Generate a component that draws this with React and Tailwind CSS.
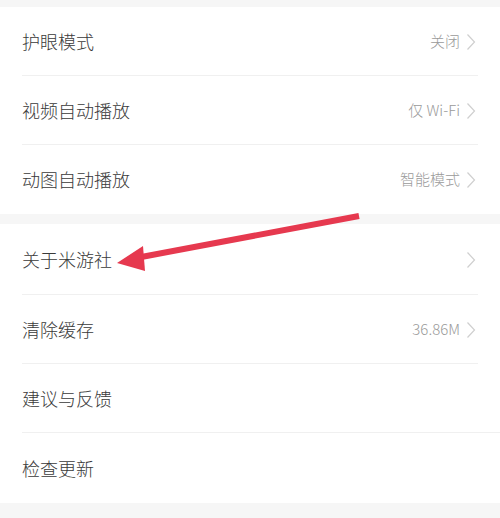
import React from 'react';

const Chevron = () => (
  <svg width="10" height="18" viewBox="0 0 10 18" fill="none" className="ml-[6px]">
    <path d="M1.5 1.5 L8.5 9 L1.5 16.5" stroke="#cfcfcf" strokeWidth="1.2" />
  </svg>
);

const Row = ({ title, value, arrow = true, height = 'h-[69px]', line = 'inset' }) => (
  <div className={`relative flex items-center pl-[22px] pr-[24px] ${height}`}>
    <span className="flex-1 text-[18px] font-light text-[#3a3a3a]">{title}</span>
    {value && <span className="text-[15px] font-light text-[#9a9a9a]">{value}</span>}
    {arrow && <Chevron />}
    {line === 'inset' && (
      <div className="absolute bottom-0 left-[22px] right-[22px] h-px bg-[#f0f0f0]" />
    )}
    {line === 'full' && (
      <div className="absolute bottom-0 left-[22px] right-0 h-px bg-[#f0f0f0]" />
    )}
  </div>
);

export default function App() {
  return (
    <div
      className="relative w-[500px] h-[518px] overflow-hidden bg-[#f6f6f6]"
      style={{ fontFamily: '"Noto Sans CJK SC", "Noto Sans", sans-serif' }}
    >
      <div className="h-[7px]" />

      {/* display settings */}
      <div className="bg-white">
        <Row title="护眼模式" value="关闭" />
        <Row title="视频自动播放" value="仅 Wi-Fi" />
        <Row title="动图自动播放" value="智能模式" line="none" />
      </div>

      <div className="h-[10px]" />

      {/* about / misc */}
      <div className="bg-white">
        <Row title="关于米游社" height="h-[71px]" />
        <Row title="清除缓存" value="36.86M" />
        <Row title="建议与反馈" arrow={false} line="full" />
        <Row title="检查更新" arrow={false} height="h-[70px]" line="none" />
      </div>

      {/* red annotation arrow */}
      <svg className="absolute left-0 top-0" width="500" height="518" viewBox="0 0 500 518">
        <line x1="359" y1="216" x2="136" y2="258" stroke="#e6394f" strokeWidth="6" />
        <polygon points="117,263 143,246 145,271" fill="#e6394f" />
      </svg>
    </div>
  );
}
